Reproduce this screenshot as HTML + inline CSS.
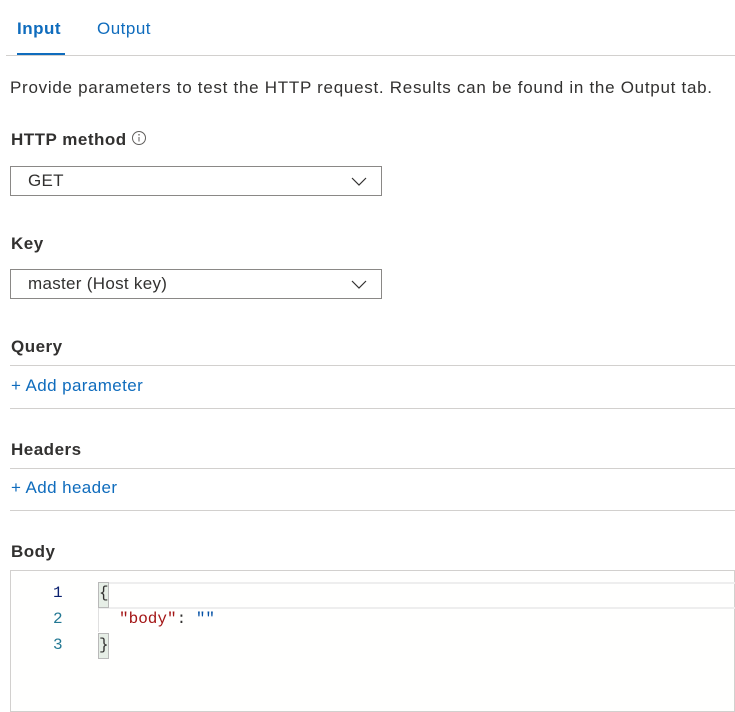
<!DOCTYPE html>
<html><head><style>
body{margin:0;width:735px;height:690px;background:#fff;font-family:"Liberation Sans",sans-serif;color:#323130;position:relative;overflow:hidden}
.a{position:absolute;white-space:nowrap}
.tab{font-size:17px;top:19px;letter-spacing:0.5px}
.lbl{font-size:17px;font-weight:bold;color:#323130;letter-spacing:0.5px}
.sel{position:absolute;left:10px;width:370px;height:28px;border:1px solid #8a8886;font-size:17px;letter-spacing:0.3px}
.sel span{position:absolute;left:17px;top:4px}
.sel svg{position:absolute;right:14px;top:10px}
.hr{position:absolute;left:10px;right:0;height:1px;background:#d2d0ce}
.link{color:#0f6cbd;font-size:17px;letter-spacing:0.4px}
.mono{font-family:"Liberation Mono",monospace;font-size:16px}
</style></head><body>
<div class="a tab" style="left:17px;color:#0f6cbd;font-weight:bold">Input</div>
<div class="a tab" style="left:97px;color:#0f6cbd">Output</div>
<div class="a" style="left:17px;top:53px;width:48px;height:3px;background:#0f6cbd"></div>
<div class="a" style="left:6px;right:0;top:55px;height:1px;background:#d2d0ce"></div>
<div class="a" style="left:10px;top:78px;font-size:17px;letter-spacing:0.72px;color:#323130">Provide parameters to test the HTTP request. Results can be found in the Output tab.</div>
<div class="a lbl" style="left:11px;top:130px">HTTP method</div>
<svg class="a" style="left:131px;top:130px" width="16" height="16"><circle cx="8" cy="8" r="6.5" fill="none" stroke="#605e5c"/><line x1="8" y1="7" x2="8" y2="11.5" stroke="#605e5c"/><circle cx="8" cy="4.8" r=".8" fill="#605e5c"/></svg>
<div class="sel" style="top:166px"><span>GET</span><svg width="16" height="9"><path d="M1 1l7 7 7-7" fill="none" stroke="#323130" stroke-width="1.2"/></svg></div>
<div class="a lbl" style="left:11px;top:234px">Key</div>
<div class="sel" style="top:269px"><span>master (Host key)</span><svg width="16" height="9"><path d="M1 1l7 7 7-7" fill="none" stroke="#323130" stroke-width="1.2"/></svg></div>
<div class="a lbl" style="left:11px;top:337px">Query</div>
<div class="hr" style="top:365px"></div>
<div class="a link" style="left:11px;top:376px">+ Add parameter</div>
<div class="hr" style="top:408px"></div>
<div class="a lbl" style="left:11px;top:440px">Headers</div>
<div class="hr" style="top:468px"></div>
<div class="a link" style="left:11px;top:478px">+ Add header</div>
<div class="hr" style="top:510px"></div>
<div class="a lbl" style="left:11px;top:542px">Body</div>
<div class="a" style="left:10px;top:570px;right:0;height:140px;border:1px solid #d2d0ce;background:#fffffe"></div>
<div class="a" style="left:98px;top:582px;right:0;height:23px;border-top:2px solid #eeeeee;border-bottom:2px solid #eeeeee"></div>
<div class="a" style="left:98px;top:606px;width:1px;height:26px;background:#e0e0e0"></div>
<div class="a" style="left:98px;top:582px;width:9px;height:24px;background:#e6eee6;border:1px solid #b9b9b9"></div>
<div class="a" style="left:98px;top:633px;width:9px;height:24px;background:#e6eee6;border:1px solid #b9b9b9"></div>
<div class="a mono" style="left:53px;top:584px;color:#0b216f">1</div>
<div class="a mono" style="left:53px;top:610px;color:#237893">2</div>
<div class="a mono" style="left:53px;top:636px;color:#237893">3</div>
<div class="a mono" style="left:99px;top:584px">{</div>
<div class="a mono" style="left:119px;top:610px"><span style="color:#a31515">"body"</span>: <span style="color:#0451a5">""</span></div>
<div class="a mono" style="left:99px;top:636px">}</div>
</body></html>
